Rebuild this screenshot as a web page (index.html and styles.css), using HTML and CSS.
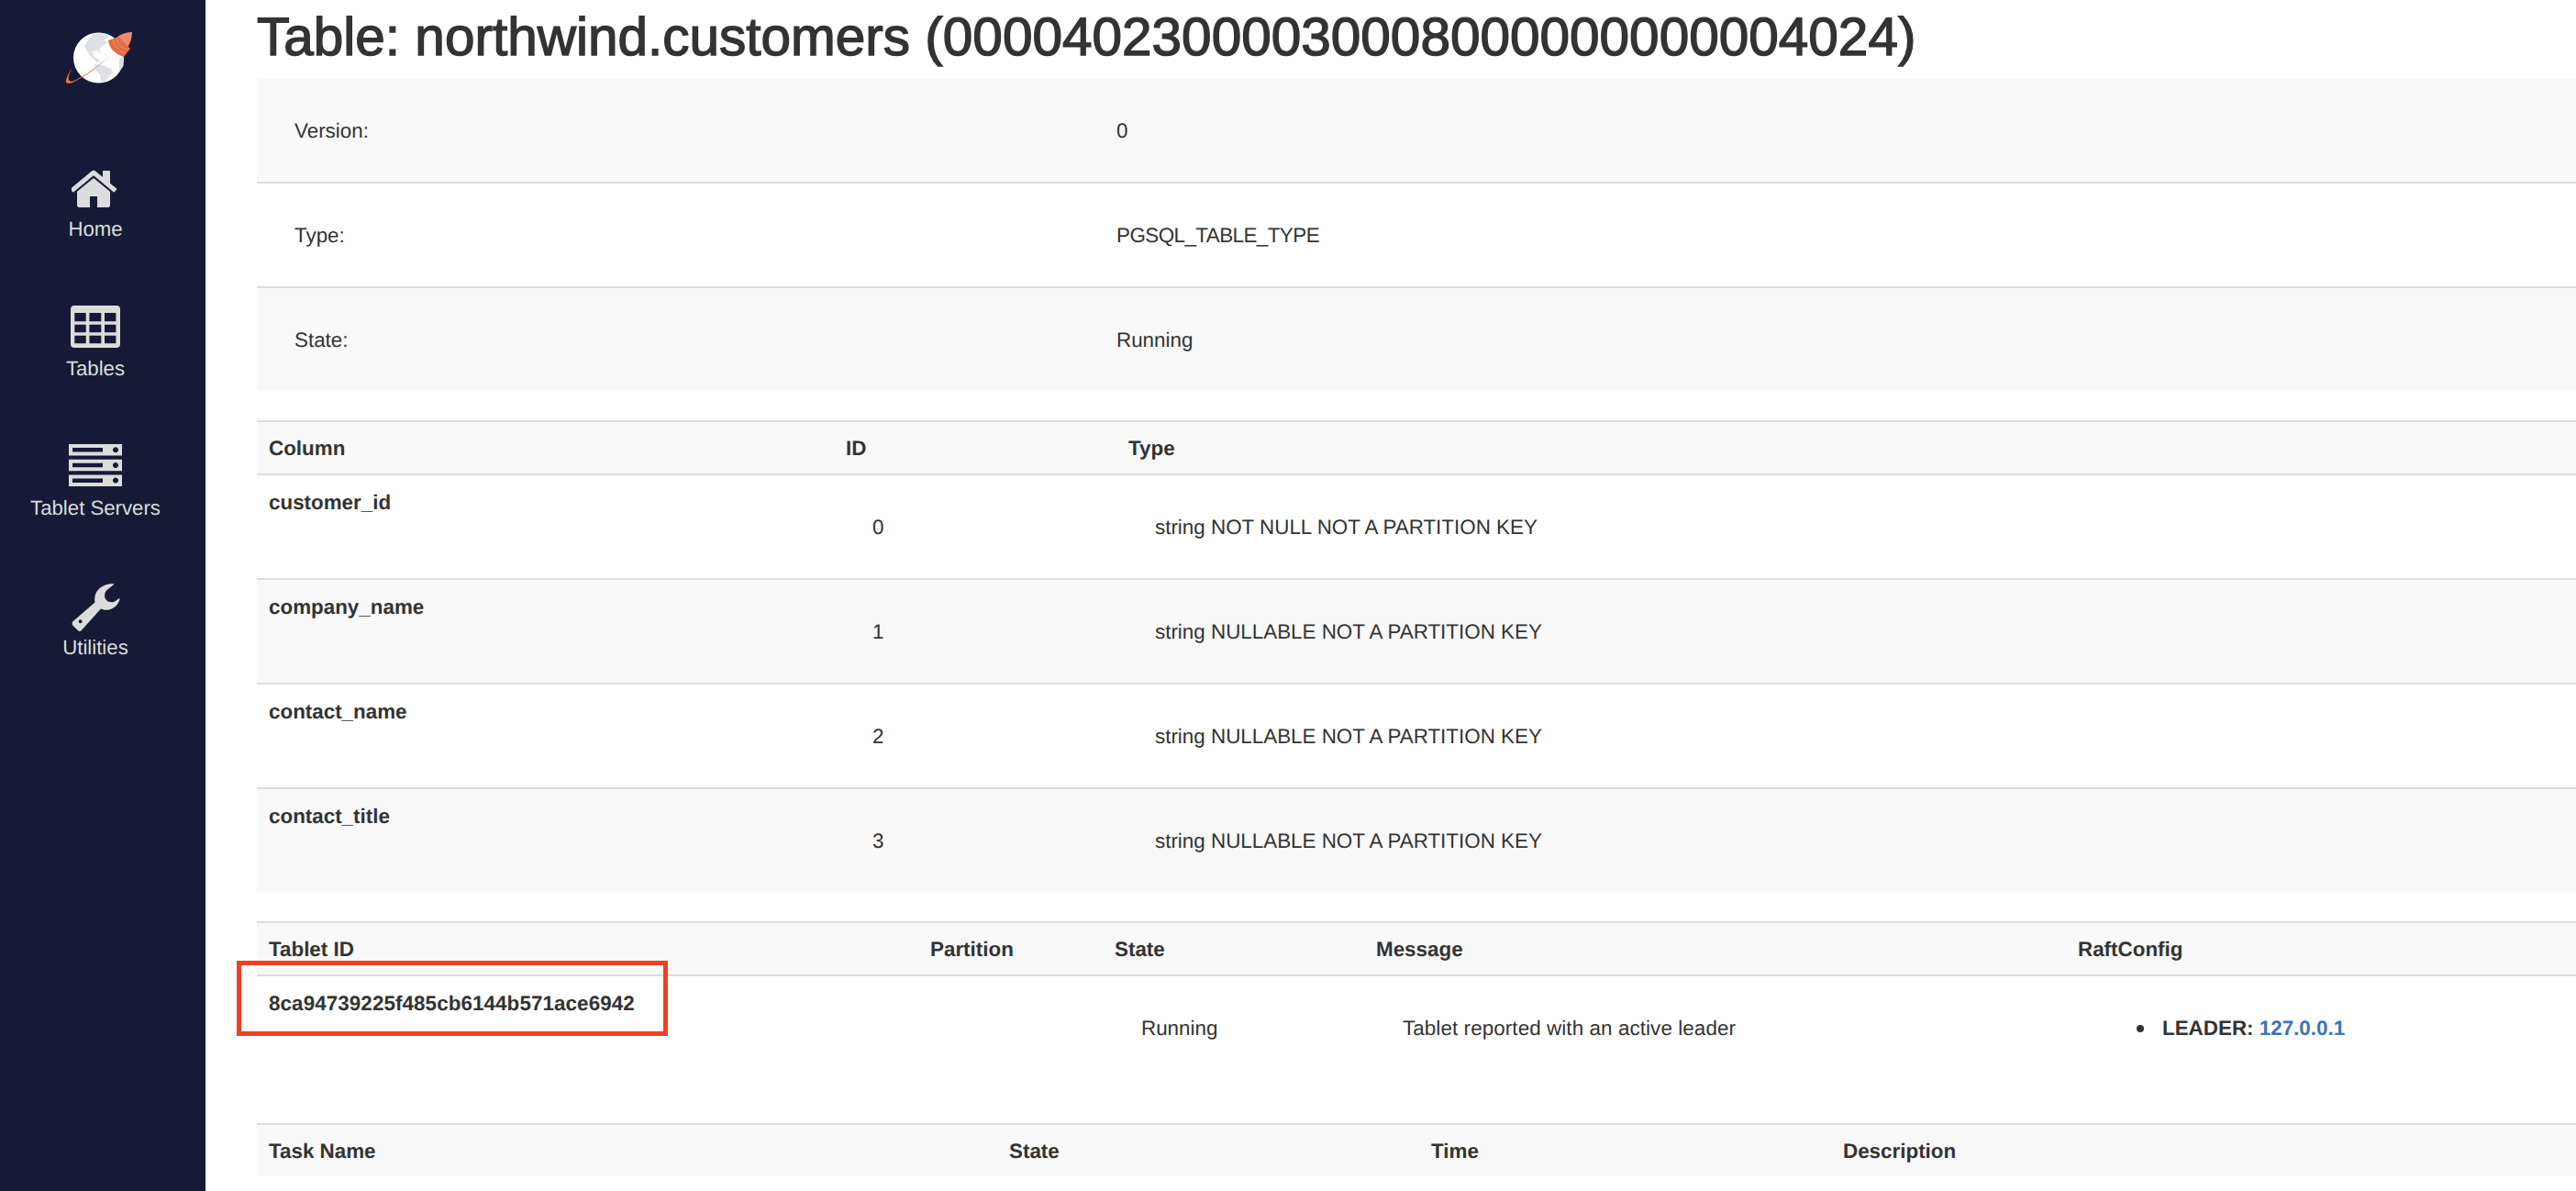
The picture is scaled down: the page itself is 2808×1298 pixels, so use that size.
FILE: index.html
```html
<!DOCTYPE html>
<html lang="en">
<head>
<meta charset="utf-8">
<title>Table: northwind.customers</title>
<link rel="stylesheet" href="styles.css">
</head>
<body>
<div class="page">
  <aside class="sidebar">
    <svg class="logo" viewBox="68 32 80 64" aria-hidden="true">
      <circle cx="107.500" cy="63" r="27.500" fill="#fff"/>
      <path d="M102 37L112 36L119 40L114 44L117 47L111 50L108 54L110 58L105 55L100 56L103 62L110 66L106 68L99 62L94 54L92 50L96 44Z" fill="#dde1e5"/>
      <path d="M103 70L112 71L121 75L123 79L118 84L114 90L110 89L109 81L104 76Z" fill="#dde1e5"/>
      <path d="M130 63L135 62L134.500 72L130 78Z" fill="#dde1e5"/>
      <path d="M120 60C108 73 92 84 79 90C74 92 71 91 72 87C73 83 75 79 79 74C76 79 74 84 75 87C76 89 78 89 81 88C93 82 108 72 120 60Z" fill="#e5704a"/>
      <path d="M128 40C132 37 138 35 144 35C144 41 142 47 139 52Z" fill="#ea8c70"/>
      <path d="M118 44L129 40L142 53L135 62C125 59 119 52 118 44Z" fill="#e56c45"/>
      <path d="M123 43C124 50 130 56 137 58M127 42C128 48 133 53 139 54" stroke="#ee8d72" stroke-width="1" fill="none"/>
    </svg>
    <nav class="nav">
      <a class="nav-item">
        <span class="nav-icon">
          <svg class="icon-home" viewBox="64 230 1664 1306"><path d="M1408 992v480q0 26-19 45t-45 19h-384v-384h-256v384h-384q-26 0-45-19t-19-45v-480q0-1 .5-3t.5-3l575-474 575 474q1 2 1 6zm223-69l-62 74q-8 9-21 11h-3q-13 0-21-7l-692-577-692 577q-12 8-24 7-13-2-21-11l-62-74q-8-10-7-23.5t11-21.5l719-599q32-26 76-26t76 26l244 204v-195q0-14 9-23t23-9h192q14 0 23 9t9 23v408l219 182q10 8 11 21.5t-7 23.5z"/></svg>
        </span>
        <span class="nav-label">Home</span>
      </a>
      <a class="nav-item">
        <span class="nav-icon">
          <svg class="icon-table" viewBox="0 0 54 46"><path fill-rule="evenodd" d="M4 0h46a4 4 0 0 1 4 4v38a4 4 0 0 1-4 4H4a4 4 0 0 1-4-4V4a4 4 0 0 1 4-4zM4.300 8v9.300h12.400V8zM20.400 8v9.300h12.900V8zM37 8v9.300h12.400V8zM4.300 20.700v8.600h12.400v-8.600zM20.400 20.700v8.600h12.900v-8.600zM37 20.700v8.600h12.400v-8.600zM4.300 32.700v8.600h12.400v-8.600zM20.400 32.700v8.600h12.900v-8.600zM37 32.700v8.600h12.400v-8.600z"/></svg>
        </span>
        <span class="nav-label">Tables</span>
      </a>
      <a class="nav-item">
        <span class="nav-icon">
          <svg class="icon-server" viewBox="0 0 58 46"><path fill-rule="evenodd" d="M0 0h58v12.5H0zM4 4v4.500h33V4zM51 3.200a3 3 0 1 0 .01 0zM0 16.700h58v12.500H0zM4 20.700v4.500h33v-4.500zM51 19.900a3 3 0 1 0 .01 0zM0 33.400h58v12.600H0zM4 37.400v4.500h33v-4.500zM51 36.600a3 3 0 1 0 .01 0z"/></svg>
        </span>
        <span class="nav-label">Tablet Servers</span>
      </a>
      <a class="nav-item">
        <span class="nav-icon">
          <svg class="icon-wrench" viewBox="0 0 53 54"><path fill-rule="evenodd" d="M47 .5C38-1 27 5 25.500 14C25 17 25 19 25.500 21L1 42Q-1 44.500 1 46.500L6.500 52Q8.500 54 10.500 52L32 28C37 30 41 30 46 27C50 24.500 53 20 53 16L47 20Q41 22 37 17Q35 12 38 8ZM11.300 42a2 2 0 1 0-4 0a2 2 0 1 0 4 0z"/></svg>
        </span>
        <span class="nav-label">Utilities</span>
      </a>
    </nav>
  </aside>

  <main class="main">
    <h1 class="title">Table: northwind.customers (00004023000030008000000000004024)</h1>

    <table class="grid info">
      <colgroup><col class="c-info-1"><col></colgroup>
      <tbody>
        <tr><td>Version:</td><td>0</td></tr>
        <tr><td>Type:</td><td class="tight">PGSQL_TABLE_TYPE</td></tr>
        <tr><td>State:</td><td>Running</td></tr>
      </tbody>
    </table>

    <table class="grid">
      <colgroup><col class="c-col-1"><col class="c-col-2"><col></colgroup>
      <thead><tr><th>Column</th><th>ID</th><th>Type</th></tr></thead>
      <tbody>
        <tr><th>customer_id</th><td>0</td><td>string NOT NULL NOT A PARTITION KEY</td></tr>
        <tr><th>company_name</th><td>1</td><td>string NULLABLE NOT A PARTITION KEY</td></tr>
        <tr><th>contact_name</th><td>2</td><td>string NULLABLE NOT A PARTITION KEY</td></tr>
        <tr><th>contact_title</th><td>3</td><td>string NULLABLE NOT A PARTITION KEY</td></tr>
      </tbody>
    </table>

    <table class="grid">
      <colgroup><col class="c-tab-1"><col class="c-tab-2"><col class="c-tab-3"><col class="c-tab-4"><col></colgroup>
      <thead><tr><th>Tablet ID</th><th>Partition</th><th>State</th><th>Message</th><th>RaftConfig</th></tr></thead>
      <tbody class="plain">
        <tr>
          <th class="loose">8ca94739225f485cb6144b571ace6942</th>
          <td></td>
          <td>Running</td>
          <td class="loose">Tablet reported with an active leader</td>
          <td><ul class="raft"><li><strong>LEADER:</strong> <a class="link">127.0.0.1</a></li></ul></td>
        </tr>
      </tbody>
    </table>

    <table class="grid tasks">
      <colgroup><col class="c-task-1"><col class="c-task-2"><col class="c-task-3"><col></colgroup>
      <thead><tr><th>Task Name</th><th>State</th><th>Time</th><th>Description</th></tr></thead>
    </table>

    <div class="highlight"></div>
  </main>
</div>
</body>
</html>
```
FILE: styles.css
```css
* { box-sizing: border-box; }
html, body { margin: 0; height: 100%; overflow: hidden; background: #fff; }
body {
  font-family: "Liberation Sans", Arial, sans-serif;
  font-size: 22.4px;
  line-height: 32px;
  color: #333;
  text-rendering: geometricPrecision;
}
.page { display: flex; height: 1298px; }

.sidebar {
  flex: 0 0 224px;
  background: #161a36;
  display: flex;
  flex-direction: column;
  align-items: flex-start;
}
.logo { width: 80px; height: 64px; margin: 32px 0 0 68px; flex: none; }
.nav { width: 208px; margin-top: 72px; display: flex; flex-direction: column; }
.nav-item {
  height: 152px;
  display: flex;
  flex-direction: column;
  align-items: center;
  color: #dcdcdc;
}
.nav-icon { height: 58px; display: flex; align-items: flex-end; justify-content: center; }
.nav-icon svg { display: block; fill: #dcdcdc; }
.icon-home { width: 52px; height: 41px; }
.icon-table { width: 54px; height: 46px; margin-bottom: -1px; }
.icon-server { width: 58px; height: 46px; }
.icon-wrench { width: 53px; height: 53px; margin-bottom: -7px; }
.nav-label { font-size: 22.2px; line-height: 32px; margin-top: 8px; white-space: nowrap; }

.main { flex: 1; min-width: 0; position: relative; padding-left: 56px; }
.title {
  margin: 0 0 5px;
  font-size: 58.5px;
  line-height: 81px;
  font-weight: 400;
  white-space: nowrap;
  color: #333;
  -webkit-text-stroke: 1.4px #333;
}

.grid {
  width: 2528px;
  table-layout: fixed;
  border-collapse: separate;
  border-spacing: 0;
  margin-bottom: 32px;
}
.grid th { font-weight: 700; text-align: left; vertical-align: top; padding: 14px 13px 10px; }
.grid td { padding: 41px 42px 39px; vertical-align: top; }
.info td:first-child { padding-left: 41px; }
.grid thead th { padding: 13px 13px 11px; border-top: 2px solid #ddd; border-bottom: 2px solid #ddd; background: #f9f9f9; }
.grid tbody tr + tr > * { border-top: 2px solid #ddd; }
.grid tbody tr:nth-child(even) > * { background: #f9f9f9; }
.grid tbody.plain tr > * { background: #fff; }
.info tbody tr:nth-child(odd) > * { background: #f9f9f9; }
.info tbody tr:nth-child(even) > * { background: #fff; }
.tasks thead th { border-bottom: 0; }
.tasks { margin-bottom: 0; }
.loose { letter-spacing: 0.09px; }
.tight { letter-spacing: -0.55px; }

.c-info-1 { width: 895px; }
.c-col-1 { width: 629px; }
.c-col-2 { width: 308px; }
.c-tab-1 { width: 721px; }
.c-tab-2 { width: 201px; }
.c-tab-3 { width: 285px; }
.c-tab-4 { width: 765px; }
.c-task-1 { width: 807px; }
.c-task-2 { width: 460px; }
.c-task-3 { width: 449px; }

.raft { margin: 0 0 16px; padding-left: 63px; list-style: none; }
.raft li { position: relative; }
.raft li::before {
  content: "";
  position: absolute;
  left: -28px;
  top: 12px;
  width: 8px;
  height: 8px;
  border-radius: 50%;
  background: #333;
}
.link { color: #3a75b5; font-weight: 700; }

.highlight {
  position: absolute;
  left: 34px;
  top: 1047px;
  width: 470px;
  height: 82px;
  border: 5px solid #ef4023;
}
```
